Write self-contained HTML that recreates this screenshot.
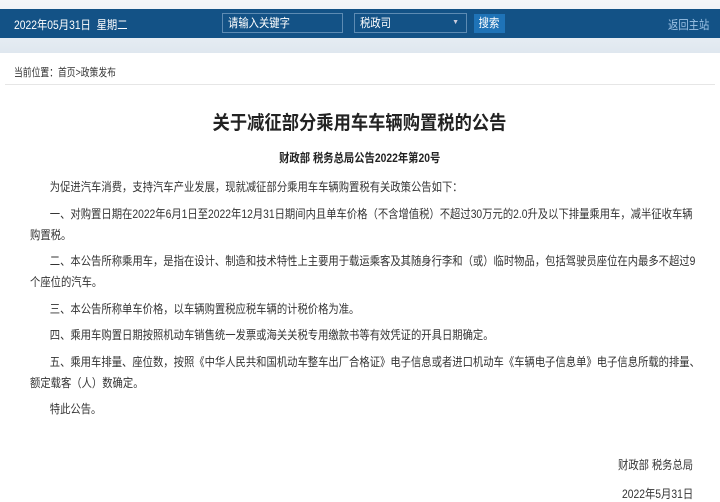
<!DOCTYPE html>
<html><head><meta charset="utf-8"><style>
*{margin:0;padding:0;box-sizing:border-box}
body{width:720px;height:502px;overflow:hidden;background:#fff;font-family:"Liberation Sans","Noto Sans CJK SC",sans-serif;color:#333;position:relative}
.sx{transform:scaleX(0.86);transform-origin:0 0;white-space:nowrap}
.top{position:absolute;left:0;top:0;width:720px;height:53px;background:linear-gradient(180deg,#f4f6f9 0,#e8eef4 60%,#dfe7ef 100%)}
.bar{position:absolute;left:0;top:9px;width:720px;height:29px;background:#135286;color:#fff;font-size:12px}
.bar .d{position:absolute;left:14px;top:7px}
.inp{position:absolute;left:222px;top:4px;width:121px;height:20px;border:1px solid #5d8bb3;padding-left:5px;line-height:18px}
.sel{position:absolute;left:354px;top:4px;width:113px;height:20px;border:1px solid #5d8bb3;padding-left:5px;line-height:18px}
.sel span{position:absolute;right:7px;top:0;font-size:7px;color:#ccd}
.btn{position:absolute;left:474px;top:5px;width:31px;height:19px;background:#1f73b7;text-align:center;line-height:19px}
.btn i{font-style:normal;display:inline-block;transform:scaleX(0.86)}
.back{position:absolute;left:668px;top:7px;color:#9ec3e6}
.crumb{position:absolute;left:14px;top:64px;font-size:11px;color:#333;transform:scaleX(0.8);transform-origin:0 0;white-space:nowrap}
.line{position:absolute;left:5px;top:84px;width:710px;height:1px;background:#e6e6e6}
h1{position:absolute;left:0;width:720px;top:108px;text-align:center;font-size:19px;font-weight:bold;color:#222}
h1 span,h2 span{display:inline-block;transform:scaleX(0.91)}
h2 span{transform:scaleX(0.86)}
h2{position:absolute;left:0;width:720px;top:149px;text-align:center;font-size:12px;font-weight:bold;color:#222}
.txt{position:absolute;left:30px;top:177px;width:781px;font-size:12px;line-height:21px;color:#333;transform:scaleX(0.86);transform-origin:0 0}
.txt p{text-indent:23px;margin-bottom:5.5px}
.f{position:absolute;left:618px;font-size:12px;transform:scaleX(0.86);transform-origin:0 0;white-space:nowrap}
</style></head><body>
<div class="top"></div>
<div class="bar"><div class="d sx">2022年05月31日&nbsp; 星期二</div>
<div class="inp"><div class="sx">请输入关键字</div></div><div class="sel"><div class="sx">税政司</div><span>▼</span></div><div class="btn"><i>搜索</i></div>
<div class="back sx">返回主站</div></div>
<div class="crumb">当前位置：首页&gt;政策发布</div>
<div class="line"></div>
<h1><span>关于减征部分乘用车车辆购置税的公告</span></h1>
<h2><span>财政部 税务总局公告2022年第20号</span></h2>
<div class="txt">
<p>为促进汽车消费，支持汽车产业发展，现就减征部分乘用车车辆购置税有关政策公告如下：</p>
<p>一、对购置日期在2022年6月1日至2022年12月31日期间内且单车价格（不含增值税）不超过30万元的2.0升及以下排量乘用车，减半征收车辆购置税。</p>
<p>二、本公告所称乘用车，是指在设计、制造和技术特性上主要用于载运乘客及其随身行李和（或）临时物品，包括驾驶员座位在内最多不超过9个座位的汽车。</p>
<p>三、本公告所称单车价格，以车辆购置税应税车辆的计税价格为准。</p>
<p>四、乘用车购置日期按照机动车销售统一发票或海关关税专用缴款书等有效凭证的开具日期确定。</p>
<p>五、乘用车排量、座位数，按照《中华人民共和国机动车整车出厂合格证》电子信息或者进口机动车《车辆电子信息单》电子信息所载的排量、额定载客（人）数确定。</p>
<p>特此公告。</p>
</div>
<div class="f" style="top:456px">财政部 税务总局</div>
<div class="f" style="top:485px;left:622px">2022年5月31日</div>
</body></html>
